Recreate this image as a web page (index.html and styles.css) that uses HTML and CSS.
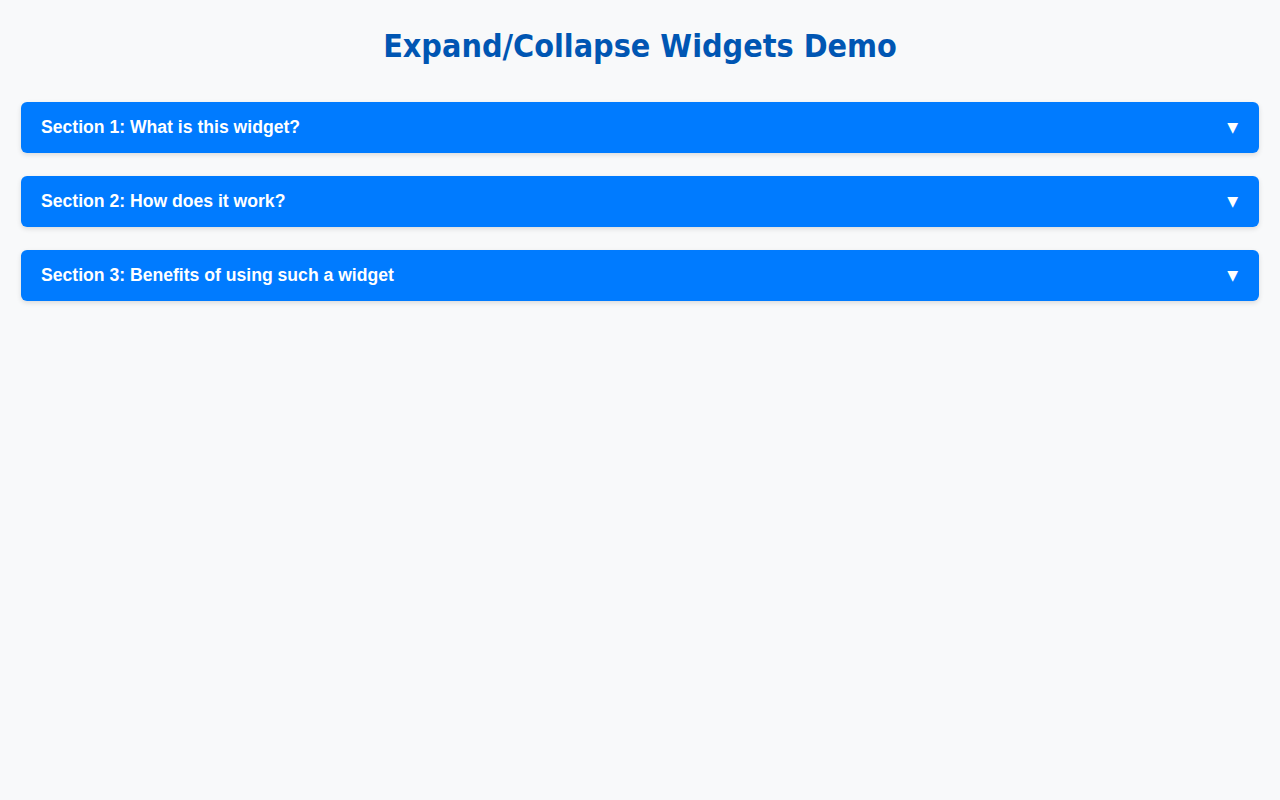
FILE: index.html
```html
<!DOCTYPE html>
<html lang="en">
<head>
<meta charset="utf-8">
<title>Expand/Collapse Widgets Demo</title>
<link rel="stylesheet" href="styles.css">
</head>
<body>
<h1 class="title">Expand/Collapse Widgets Demo</h1>
<div class="sections">
  <div class="section">
    <div class="section-header"><span>Section 1: What is this widget?</span><span class="arrow">▼</span></div>
  </div>
  <div class="section">
    <div class="section-header"><span>Section 2: How does it work?</span><span class="arrow">▼</span></div>
  </div>
  <div class="section">
    <div class="section-header"><span>Section 3: Benefits of using such a widget</span><span class="arrow">▼</span></div>
  </div>
</div>
</body>
</html>
```
FILE: styles.css
```css
html, body {
  margin: 0;
  padding: 0;
  background: #f8f9fa;
}
body {
  padding: 26px 21px 20px;
  font-family: "Liberation Sans", Arial, sans-serif;
}
.title {
  margin: 0 0 36px;
  text-align: center;
  font-family: "DejaVu Sans Condensed", "DejaVu Sans", sans-serif;
  font-weight: bold;
  font-size: 32px;
  line-height: 40px;
  color: #0056b3;
}
.sections {
  display: flex;
  flex-direction: column;
  gap: 23px;
}
.section {
  border-radius: 6px;
  box-shadow: 0 2px 5px rgba(0, 0, 0, 0.12);
  overflow: hidden;
}
.section-header {
  display: flex;
  justify-content: space-between;
  align-items: center;
  background: #007bff;
  color: #fff;
  font-weight: bold;
  font-size: 17.6px;
  line-height: 19px;
  padding: 16px 20px;
}
.arrow {
  font-size: 14px;
  font-family: "DejaVu Sans", sans-serif;
  margin-right: 1px;
}
```
